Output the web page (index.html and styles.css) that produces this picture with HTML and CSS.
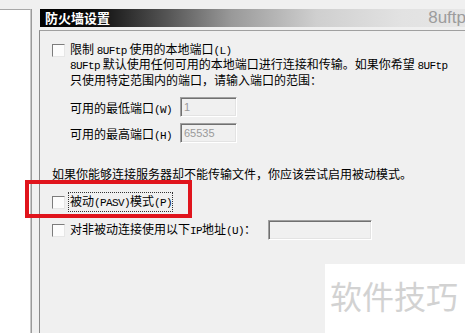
FILE: index.html
```html
<!DOCTYPE html>
<html>
<head>
<meta charset="utf-8">
<link rel="stylesheet" href="styles.css">
</head>
<body>
<div class="window">
  <div class="side"></div>
  <div class="main">
    <div class="header">
      <span class="title">防火墙设置</span>
      <span class="brand">8uftp</span>
    </div>
    <div class="group">
      <div class="check-row first">
        <span class="cb"></span>
        <span class="lbl">限制 <span class="l">8UFtp</span> 使用的本地端口<span class="l">(L)</span></span>
      </div>
      <div class="desc">
        <div><span class="l">8UFtp</span> 默认使用任何可用的本地端口进行连接和传输。如果你希望 <span class="l">8UFtp</span></div>
        <div>只使用特定范围内的端口，请输入端口的范围：</div>
      </div>
      <div class="field-row r1">
        <span class="flabel">可用的最低端口<span class="l">(W)</span></span>
        <span class="input small">1</span>
      </div>
      <div class="field-row r2">
        <span class="flabel">可用的最高端口<span class="l">(H)</span></span>
        <span class="input small">65535</span>
      </div>
      <p class="note">如果你能够连接服务器却不能传输文件，你应该尝试启用被动模式。</p>
      <div class="check-row pasv">
        <span class="cb"></span>
        <span class="lbl focus">被动<span class="l">(PASV)</span>模式<span class="l">(P)</span></span>
      </div>
      <div class="check-row ip">
        <span class="cb"></span>
        <span class="lbl">对非被动连接使用以下<span class="l">IP</span>地址<span class="l">(U)</span>：</span>
        <span class="input wide"></span>
      </div>
    </div>
  </div>
</div>
<div class="redbox"></div>
<div class="watermark">软件技巧</div>
</body>
</html>
```

FILE: styles.css
```css
html, body {
  margin: 0;
  padding: 0;
}
body {
  width: 465px;
  height: 333px;
  overflow: hidden;
  background: #f0f0f0;
  font-family: "Noto Sans CJK SC", "Liberation Sans", sans-serif;
  font-size: 12px;
  color: #000;
  position: relative;
}
.window {
  display: flex;
  height: 333px;
}
.side {
  width: 30px;
  margin-top: 9px;
  background: #fff;
  border-top: 1px solid #a8a8a8;
  border-right: 1px solid #c8c8c8;
  box-shadow: 1px 0 0 #9a9a9a;
  flex: none;
}
.main {
  flex: 1;
  margin-left: 8px;
  padding-top: 9px;
  display: flex;
  flex-direction: column;
  min-width: 0;
}
.header {
  height: 18px;
  margin-left: 1px;
  display: flex;
  align-items: center;
  justify-content: space-between;
  overflow: hidden;
  background: linear-gradient(to right, #000 0%, #0a0a0a 12%, #555 30%, #999 45%, #cfcfcf 65%, #e2e2e2 85%, #e6e6e6 100%);
}
.title {
  color: #fff;
  font-weight: bold;
  font-size: 13px;
  line-height: 18px;
  padding-left: 5px;
}
.brand {
  font-family: "Liberation Sans", sans-serif;
  font-size: 17px;
  color: #9c9c9c;
  margin-right: -1px;
  line-height: 18px;
}
.group {
  flex: 1;
  margin-top: 3px;
  border-left: 1px solid #8a8a8a;
  border-top: 1px solid #a0a0a0;
  padding-left: 12px;
  display: flex;
  flex-direction: column;
}
.l {
  font-family: "Liberation Mono", monospace;
  font-size: 11px;
  letter-spacing: -0.6px;
}
.check-row {
  display: flex;
  align-items: center;
  gap: 5px;
  white-space: nowrap;
}
.cb {
  width: 11px;
  height: 11px;
  background: #fcfcfc;
  border: 1px solid;
  border-color: #7c7c7c #e6e6e6 #e6e6e6 #7c7c7c;
  flex: none;
}
.lbl {
  line-height: 14px;
}
.check-row.first {
  margin-top: 12px;
  height: 14px;
}
.desc {
  margin-left: 18px;
  line-height: 13px;
  white-space: nowrap;
}
.field-row {
  display: flex;
  align-items: center;
  margin-left: 18px;
  height: 20px;
}
.field-row.r1 {
  margin-top: 11px;
}
.field-row.r2 {
  margin-top: 6px;
}
.flabel {
  width: 110px;
  white-space: nowrap;
}
.input {
  box-sizing: border-box;
  height: 20px;
  border: 1px solid;
  border-color: #a0a0a0 #fff #fff #a0a0a0;
  box-shadow: inset 1px 1px 0 #707070, inset -1px -1px 0 #e3e3e3;
  background: #f0f0f0;
  font-family: "Liberation Sans", sans-serif;
  font-size: 11px;
  color: #9a9a9a;
  line-height: 18px;
  padding-left: 3px;
}
.input.small {
  width: 57px;
}
.input.wide {
  width: 104px;
  margin-left: 7px;
}
.note {
  margin: 24px 0 0 0;
  line-height: 14px;
  white-space: nowrap;
}
.check-row.pasv {
  margin-top: 13px;
  height: 16px;
}
.focus {
  outline: 1px dotted #333;
  outline-offset: 0;
  padding: 1px 0 1px 1px;
  margin-left: -1px;
  line-height: 14px;
}
.check-row.ip {
  margin-top: 10px;
  height: 20px;
}
.redbox {
  position: absolute;
  left: 25px;
  top: 180px;
  width: 167px;
  height: 38px;
  box-sizing: border-box;
  border: 4px solid #e0141c;
}
.watermark {
  position: absolute;
  left: 325px;
  top: 264px;
  width: 140px;
  height: 69px;
  box-sizing: border-box;
  background: #fff;
  padding: 15px 0 0 5px;
  font-size: 32px;
  line-height: 32px;
  color: #d2d2d2;
  white-space: nowrap;
}
```
